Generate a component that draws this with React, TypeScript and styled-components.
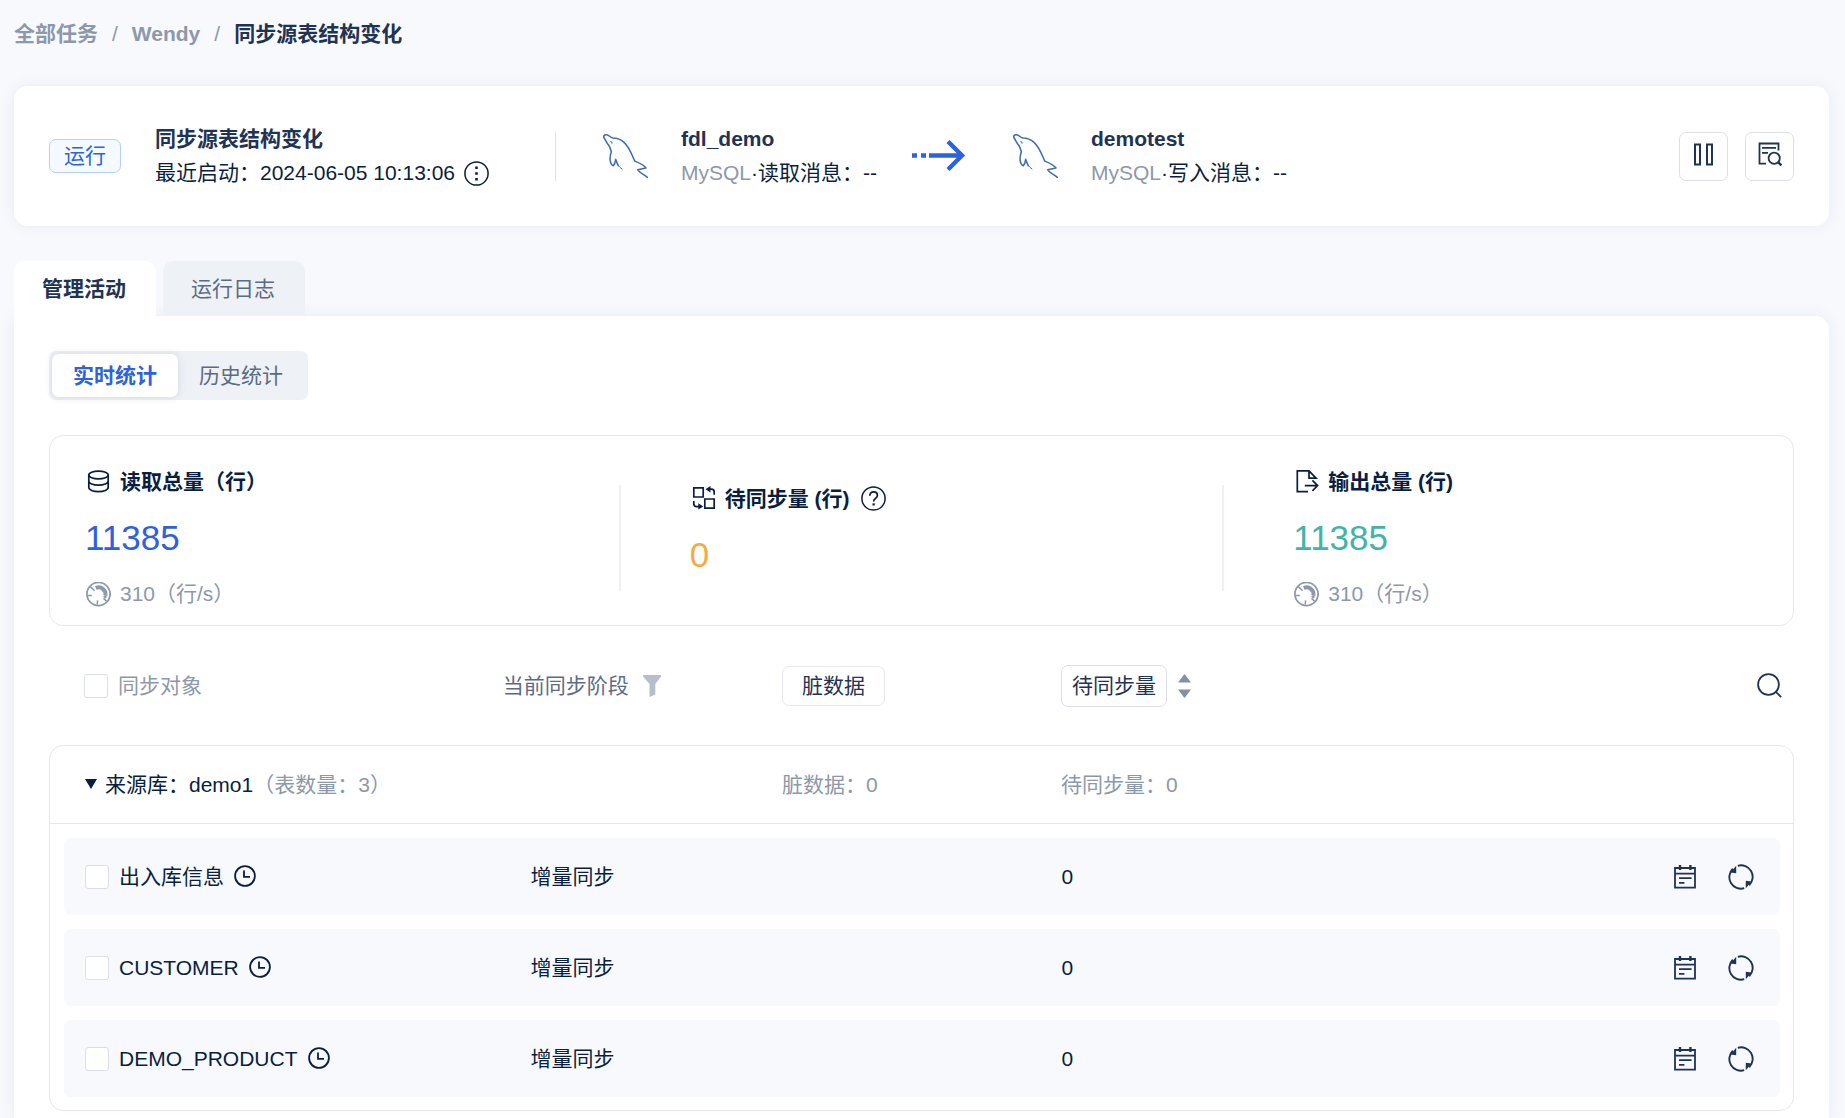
import React from "react";
import styled, { createGlobalStyle } from "styled-components";

const color = {
  page: "#f7f9fd",
  ink: "#091e40",
  title: "#1f3354",
  slate: "#5b6b85",
  muted: "#8d98aa",
  line: "#e6e8ee",
  control: "#dcdfe9",
  tint: "#eef1f6",
  blue: "#2d62df",
  teal: "#3fb5aa",
  amber: "#f4ab42",
};

const GlobalStyle = createGlobalStyle`
  *, *::before, *::after { box-sizing: border-box; }
  body {
    margin: 0;
    background: ${color.page};
    color: ${color.ink};
    font-family: "Liberation Sans", "Noto Sans CJK SC", sans-serif;
    font-size: 21px;
    line-height: 28px;
  }
  button { font: inherit; color: inherit; margin: 0; cursor: pointer; }
  svg { display: block; flex: none; }
`;

const Page = styled.div`
  display: flex;
  flex-direction: column;
  min-height: 100vh;
  padding: 20px 16px 0 14px;
`;

const Breadcrumb = styled.nav`
  display: flex;
  gap: 14px;
  color: ${color.muted};
  font-weight: 700;
`;

const Crumb = styled.a`
  color: inherit;
  text-decoration: none;
`;

const Slash = styled.span`
  font-weight: 400;
`;

const CurrentCrumb = styled.span`
  color: ${color.title};
`;

const TaskCard = styled.header`
  display: flex;
  align-items: center;
  height: 140px;
  margin-top: 38px;
  padding: 0 35px;
  background: #fff;
  border-radius: 14px;
  box-shadow: 0 0 16px rgba(31, 51, 84, 0.07);
  white-space: nowrap;
`;

const StatusBadge = styled.span`
  width: 72px;
  height: 34px;
  margin-right: 34px;
  line-height: 32px;
  text-align: center;
  color: ${color.blue};
  background: #f4faff;
  border: 1px solid #b5ceff;
  border-radius: 7px;
`;

const TextPair = styled.div`
  line-height: 34px;
`;

const Strong = styled.div`
  font-weight: 700;
  color: ${color.title};
`;

const Inline = styled.div`
  display: flex;
  align-items: center;
  gap: 9px;
`;

const Muted = styled.span`
  color: ${color.muted};
`;

const TaskDivider = styled.span`
  width: 1px;
  height: 49px;
  margin: 0 47px 0 66px;
  background: ${color.control};
`;

const Endpoint = styled.div`
  display: flex;
  align-items: center;
  gap: 33px;
`;

const ArrowWrap = styled.div`
  margin: 0 47px 0 35px;
`;

const TaskActions = styled.div`
  display: flex;
  gap: 17px;
  margin-left: auto;
`;

const SquareButton = styled.button`
  display: grid;
  place-items: center;
  width: 49px;
  height: 49px;
  padding: 0 0 4px;
  color: ${color.title};
  background: #fff;
  border: 1px solid ${color.control};
  border-radius: 7px;
`;

const Tabs = styled.div`
  display: flex;
  gap: 7px;
  margin-top: 35px;
`;

const Tab = styled.button<{ $active?: boolean }>`
  position: ${(p) => (p.$active ? "relative" : "static")};
  z-index: 1;
  height: 55px;
  padding: 0 30px 0 28px;
  border: 0;
  border-radius: 10px 10px 0 0;
  background: ${(p) => (p.$active ? "#fff" : color.tint)};
  color: ${(p) => (p.$active ? color.title : color.slate)};
  font-weight: ${(p) => (p.$active ? 700 : 400)};
`;

const Panel = styled.main`
  flex: 1;
  padding: 35px 35px 7px;
  background: #fff;
  border-radius: 0 14px 0 0;
  box-shadow: 0 0 16px rgba(31, 51, 84, 0.07);
`;

const Segmented = styled.div`
  display: flex;
  width: fit-content;
  padding: 3px 4px 3px 3px;
  background: ${color.tint};
  border-radius: 7px;
`;

const Segment = styled.button<{ $active?: boolean }>`
  height: 43px;
  padding: 0 21px;
  border: 0;
  border-radius: 7px;
  background: ${(p) => (p.$active ? "#fff" : "transparent")};
  box-shadow: ${(p) => (p.$active ? "0 0 9px rgba(31, 51, 84, 0.12)" : "none")};
  color: ${(p) => (p.$active ? color.blue : color.slate)};
  font-weight: ${(p) => (p.$active ? 700 : 400)};
`;

const StatsCard = styled.section`
  display: grid;
  grid-template-columns: 8fr 2px 9fr 2px 8fr;
  margin-top: 35px;
  padding: 32px 34px 17px;
  border: 1px solid ${color.line};
  border-radius: 14px;
`;

const StatDivider = styled.span`
  align-self: center;
  height: 106px;
  background: ${color.tint};
`;

const Stat = styled.div<{ $inset?: boolean; $lift?: boolean }>`
  display: flex;
  flex-direction: column;
  justify-content: center;
  gap: 21px;
  padding-left: ${(p) => (p.$inset ? 68 : 0)}px;
  padding-bottom: ${(p) => (p.$lift ? 16 : 0)}px;
`;

const StatTitle = styled.div`
  display: flex;
  align-items: center;
  gap: 7px;
  font-weight: 700;
`;

const StatValue = styled.div<{ $color: string }>`
  padding-left: 1px;
  font-size: 35px;
  line-height: 42px;
  color: ${(p) => p.$color};
`;

const StatRate = styled.div`
  display: flex;
  align-items: center;
  gap: 7px;
  color: ${color.muted};
`;

const Table = styled.table`
  display: block;
  margin-top: 35px;
`;

const columns = "3fr 2fr 2fr 5fr";

const TableHead = styled.thead`
  display: block;
`;

const HeadRow = styled.tr`
  display: grid;
  grid-template-columns: ${columns};
  align-items: center;
  height: 49px;
  padding: 0 35px;
`;

const Cell = styled.td<{ $inset?: boolean }>`
  display: flex;
  align-items: center;
  gap: 10px;
  padding: 0 0 0 ${(p) => (p.$inset ? 27 : 0)}px;
`;

const HeadCell = styled.th<{ $tone?: string }>`
  display: flex;
  align-items: center;
  gap: 14px;
  padding: 0;
  font-weight: 400;
  color: ${(p) => p.$tone || color.muted};
`;

const CheckLabel = styled.label`
  display: flex;
  align-items: center;
  gap: 10px;
`;

const Checkbox = styled.input.attrs({ type: "checkbox" })`
  appearance: none;
  width: 24px;
  height: 24px;
  margin: 0;
  background: #fff;
  border: 1px solid ${color.control};
  border-radius: 3px;
  &:checked { background: ${color.blue}; }
`;

const PlainButton = styled.button`
  display: grid;
  place-items: center;
  padding: 0;
  border: 0;
  background: none;
`;

const HelpButton = styled(PlainButton)`
  margin-left: 4px;
`;

const IconButton = styled(PlainButton)`
  width: 36px;
  height: 36px;
  color: ${color.title};
`;

const SearchButton = styled(IconButton)`
  margin-left: auto;
`;

const OutlineButton = styled.button<{ $tight?: boolean }>`
  padding: ${(p) => (p.$tight ? "6px 10px" : "5px 19px")};
  color: ${color.title};
  background: #fff;
  border: 1px solid ${(p) => (p.$tight ? color.control : color.line)};
  border-radius: 7px;
`;

const PendingHeadCell = styled(HeadCell)`
  gap: 11px;
  margin-right: -29px;
`;

const Group = styled.tbody`
  display: block;
  margin-top: 35px;
  padding-bottom: 13px;
  border: 1px solid ${color.line};
  border-radius: 14px;
`;

const GroupRow = styled.tr`
  display: grid;
  grid-template-columns: 5fr 2fr 5fr;
  align-items: center;
  height: 78px;
  padding: 0 34px;
  border-bottom: 1px solid ${color.line};
`;

const GroupTitle = styled.button`
  display: flex;
  align-items: center;
  gap: 7px;
  padding: 0;
  border: 0;
  background: none;
`;

const DataRow = styled.tr`
  display: grid;
  grid-template-columns: ${columns};
  align-items: center;
  height: 77px;
  margin: 14px 13px 0 14px;
  padding: 0 21px;
  background: ${color.page};
  border-radius: 7px;
`;

const EndCell = styled(Cell)`
  grid-column: 4;
  justify-content: space-between;
`;

const RowActions = styled.div`
  display: flex;
  gap: 20px;
`;

const stroke = { fill: "none", stroke: "currentColor", strokeWidth: 2 };

const MoreIcon = () => (
  <svg width="25" height="25" viewBox="0 0 25 25" {...stroke} strokeWidth={1.5}>
    <circle cx="12.5" cy="12.5" r="11.6" />
    <path d="M11.2 6.8h2.6M11.2 12.5h2.6M11.2 18.2h2.6" strokeWidth={2.4} />
  </svg>
);

const DolphinIcon = () => (
  <svg width="45" height="44" viewBox="0 0 135 132" fill="none" stroke="#3f6db5" strokeWidth="4.6" strokeLinejoin="round" strokeLinecap="round">
    <path d="M46 95C43 90 40 83 38 76C37 84 35 91 31 95C21 92 18 74 25 53C23 46 21 39 18 35C12 29 9 21 2 9C1 3 10 1 16 4C20 7 23 11 30 12C44 12 53 16 63 25C79 39 86 60 95 81C104 85 121 91 129 102L104 107C109 118 123 120 133 130" />
    <path d="M46 95C49 99 53 102 57 105" strokeWidth="3" />
    <path d="M23 23l4 1 0 4" strokeWidth="3" />
  </svg>
);

const FlowArrow = () => (
  <svg width="54" height="33" viewBox="0 0 54 33" fill="none" stroke={color.blue} strokeWidth="4.4">
    <path d="M0 15.5h5M9 15.5h5M17 15.5h34M36 1.5l14 14-14 14" />
  </svg>
);

const PauseIcon = () => (
  <svg width="19" height="23" viewBox="0 0 19 23" {...stroke}>
    <path d="M1 1.5h5v20H1zM13 1.5h5v20h-5z" />
  </svg>
);

const LogSearchIcon = () => (
  <svg width="24" height="24" viewBox="0 0 24 24" {...stroke} strokeWidth={1.8}>
    <path d="M8 21.6H1.5V1.5h19v7M4 5.8h14M4 10.8h6" />
    <circle cx="16.2" cy="16.2" r="5.6" />
    <path d="M20 20l3.4 3.4" strokeWidth={2.4} />
  </svg>
);

const DatabaseIcon = () => (
  <svg width="29" height="25" viewBox="0 0 29 25" {...stroke} strokeWidth={1.7}>
    <ellipse cx="14.5" cy="5" rx="9.7" ry="3.8" />
    <path d="M4.8 5v12.6c0 2.2 4.3 4 9.7 4s9.7-1.8 9.7-4V5M4.8 11.2c0 2.2 4.3 4 9.7 4s9.7-1.8 9.7-4" />
  </svg>
);

const PendingIcon = () => (
  <svg width="29" height="25" viewBox="0 0 29 25" {...stroke} strokeWidth={1.7}>
    <path d="M4.8 1.8h9.4V11H4.8zM15.8 13h9.4v9.2h-9.4zM19 3.2h3.4q2.8 0 2.8 2.8v2.8M4.8 15v2.8q0 2.8 2.8 2.8h3.4" />
    <path d="M21.5 0v6.4l-5-3.2zM9.3 17.2v6.4l5-3.2z" fill="currentColor" stroke="none" />
  </svg>
);

const OutputIcon = () => (
  <svg width="29" height="25" viewBox="0 0 29 25" {...stroke} strokeWidth={1.7}>
    <path d="M16 21.6H5.3V.9H17l7 7.2h-7V.9M12.8 15.6h12M20.4 10.4l5.2 5.2-5.2 5.2" />
  </svg>
);

const HelpIcon = () => (
  <svg width="25" height="25" viewBox="0 0 25 25" {...stroke} strokeWidth={1.5}>
    <circle cx="12.5" cy="12.5" r="11.6" />
    <path d="M8.8 9.8c0-2.4 1.6-4 3.8-4s3.8 1.5 3.8 3.6c0 2.8-3.8 3-3.8 6" strokeWidth={1.7} />
    <path d="M11.5 18.4h2.2" strokeWidth={2.2} />
  </svg>
);

const GaugeIcon = () => (
  <svg width="29" height="25" viewBox="0 0 29 25" {...stroke} strokeWidth={1.7}>
    <circle cx="14.5" cy="12" r="11.6" />
    <path d="M11.8 6A6.8 6.8 0 0 1 21.3 13.5" strokeWidth={4} />
    <path d="M21.3 13.5q-.1 1.2-.6 2.4" strokeWidth={3} />
    <path d="M6.2 4.6l4.4 4.2M3.2 13.6l4.6-.2M13.2 22.8l.4-4.4M22.8 19.4l-3.2-3" strokeWidth={1.5} />
  </svg>
);

const FilterIcon = () => (
  <svg width="18" height="22" viewBox="0 0 18 22" fill="#b7bdc9">
    <path d="M0 0h18v1.5L12.3 9v10.5L6.5 22V9L0 1.5z" />
  </svg>
);

const SortIcon = () => (
  <svg width="13" height="24" viewBox="0 0 13 24" fill="#8390a5">
    <path d="M6.5 0L13 8.5H0zM6.5 24L0 15.5h13z" />
  </svg>
);

const SearchIcon = () => (
  <svg width="25" height="25" viewBox="0 0 25 25" {...stroke} strokeWidth={1.8}>
    <circle cx="11.5" cy="11.5" r="10.4" />
    <path d="M18.6 18.6l5.6 5.6" />
  </svg>
);

const CaretIcon = () => (
  <svg width="14" height="12" viewBox="0 0 14 12" fill={color.ink}>
    <path d="M1 0h12L7 10z" />
  </svg>
);

const ClockIcon = () => (
  <svg width="22" height="24" viewBox="0 0 22 24" {...stroke} strokeWidth={1.8}>
    <circle cx="11" cy="11" r="9.9" />
    <path d="M10 5.4v6.4h6" />
  </svg>
);

const PlanIcon = () => (
  <svg width="22" height="24" viewBox="0 0 22 24" {...stroke} strokeWidth={1.8}>
    <path d="M1 3h20v19.6H1zM1 8.6h20M5 13.2h12.6M5 17.8h5.4" />
    <path d="M6 0v5M16.4 0v5" strokeWidth={2.4} />
  </svg>
);

const SyncIcon = () => (
  <svg width="26" height="26" viewBox="0 0 26 26" {...stroke} strokeWidth={1.9}>
    <path d="M9.8 1.8A11.6 11.6 0 0 1 21.2 21.2M16.2 24.2A11.6 11.6 0 0 1 4.8 4.8" />
    <path d="M8.2 1.8v7.4L2.4 8.4zM17.8 24.2v-7.4l5.8.8z" fill="currentColor" stroke="none" />
  </svg>
);

const rows = [
  { name: "出入库信息", stage: "增量同步", pending: 0 },
  { name: "CUSTOMER", stage: "增量同步", pending: 0 },
  { name: "DEMO_PRODUCT", stage: "增量同步", pending: 0 },
];

export default function App() {
  return (
    <>
      <GlobalStyle />
      <Page>
        <Breadcrumb aria-label="breadcrumb">
          <Crumb href="#all">全部任务</Crumb>
          <Slash>/</Slash>
          <Crumb href="#wendy">Wendy</Crumb>
          <Slash>/</Slash>
          <CurrentCrumb>同步源表结构变化</CurrentCrumb>
        </Breadcrumb>

        <TaskCard>
          <StatusBadge>运行</StatusBadge>
          <TextPair>
            <Strong>同步源表结构变化</Strong>
            <Inline>
              最近启动：2024-06-05 10:13:06
              <PlainButton aria-label="更多">
                <MoreIcon />
              </PlainButton>
            </Inline>
          </TextPair>
          <TaskDivider />
          <Endpoint>
            <DolphinIcon />
            <TextPair>
              <Strong>fdl_demo</Strong>
              <div>
                <Muted>MySQL</Muted>·读取消息：--
              </div>
            </TextPair>
          </Endpoint>
          <ArrowWrap>
            <FlowArrow />
          </ArrowWrap>
          <Endpoint>
            <DolphinIcon />
            <TextPair>
              <Strong>demotest</Strong>
              <div>
                <Muted>MySQL</Muted>·写入消息：--
              </div>
            </TextPair>
          </Endpoint>
          <TaskActions>
            <SquareButton aria-label="暂停">
              <PauseIcon />
            </SquareButton>
            <SquareButton aria-label="查看">
              <LogSearchIcon />
            </SquareButton>
          </TaskActions>
        </TaskCard>

        <Tabs role="tablist">
          <Tab role="tab" aria-selected="true" $active>
            管理活动
          </Tab>
          <Tab role="tab" aria-selected="false">
            运行日志
          </Tab>
        </Tabs>

        <Panel>
          <Segmented>
            <Segment $active>实时统计</Segment>
            <Segment>历史统计</Segment>
          </Segmented>

          <StatsCard>
            <Stat>
              <StatTitle>
                <DatabaseIcon />
                读取总量（行）
              </StatTitle>
              <StatValue $color={color.blue}>11385</StatValue>
              <StatRate>
                <GaugeIcon />
                310（行/s）
              </StatRate>
            </Stat>
            <StatDivider />
            <Stat $inset $lift>
              <StatTitle>
                <PendingIcon />
                待同步量 (行)
                <HelpButton aria-label="帮助">
                  <HelpIcon />
                </HelpButton>
              </StatTitle>
              <StatValue $color={color.amber}>0</StatValue>
            </Stat>
            <StatDivider />
            <Stat $inset>
              <StatTitle>
                <OutputIcon />
                输出总量 (行)
              </StatTitle>
              <StatValue $color={color.teal}>11385</StatValue>
              <StatRate>
                <GaugeIcon />
                310（行/s）
              </StatRate>
            </Stat>
          </StatsCard>

          <Table>
            <TableHead>
              <HeadRow>
                <HeadCell>
                  <CheckLabel>
                    <Checkbox />
                    同步对象
                  </CheckLabel>
                </HeadCell>
                <HeadCell $tone={color.slate}>
                  当前同步阶段
                  <PlainButton aria-label="筛选">
                    <FilterIcon />
                  </PlainButton>
                </HeadCell>
                <HeadCell>
                  <OutlineButton>脏数据</OutlineButton>
                </HeadCell>
                <PendingHeadCell>
                  <OutlineButton $tight>待同步量</OutlineButton>
                  <PlainButton aria-label="排序">
                    <SortIcon />
                  </PlainButton>
                  <SearchButton aria-label="搜索">
                    <SearchIcon />
                  </SearchButton>
                </PendingHeadCell>
              </HeadRow>
            </TableHead>
            <Group>
              <GroupRow>
                <Cell>
                  <GroupTitle aria-expanded="true">
                    <CaretIcon />
                    <span>
                      来源库：demo1<Muted>（表数量：3）</Muted>
                    </span>
                  </GroupTitle>
                </Cell>
                <Cell>
                  <Muted>脏数据：0</Muted>
                </Cell>
                <Cell>
                  <Muted>待同步量：0</Muted>
                </Cell>
              </GroupRow>
              {rows.map((row) => (
                <DataRow key={row.name}>
                  <Cell>
                    <CheckLabel>
                      <Checkbox />
                      {row.name}
                    </CheckLabel>
                    <ClockIcon />
                  </Cell>
                  <Cell $inset>{row.stage}</Cell>
                  <EndCell>
                    {row.pending}
                    <RowActions>
                      <IconButton aria-label="计划">
                        <PlanIcon />
                      </IconButton>
                      <IconButton aria-label="重新同步">
                        <SyncIcon />
                      </IconButton>
                    </RowActions>
                  </EndCell>
                </DataRow>
              ))}
            </Group>
          </Table>
        </Panel>
      </Page>
    </>
  );
}
